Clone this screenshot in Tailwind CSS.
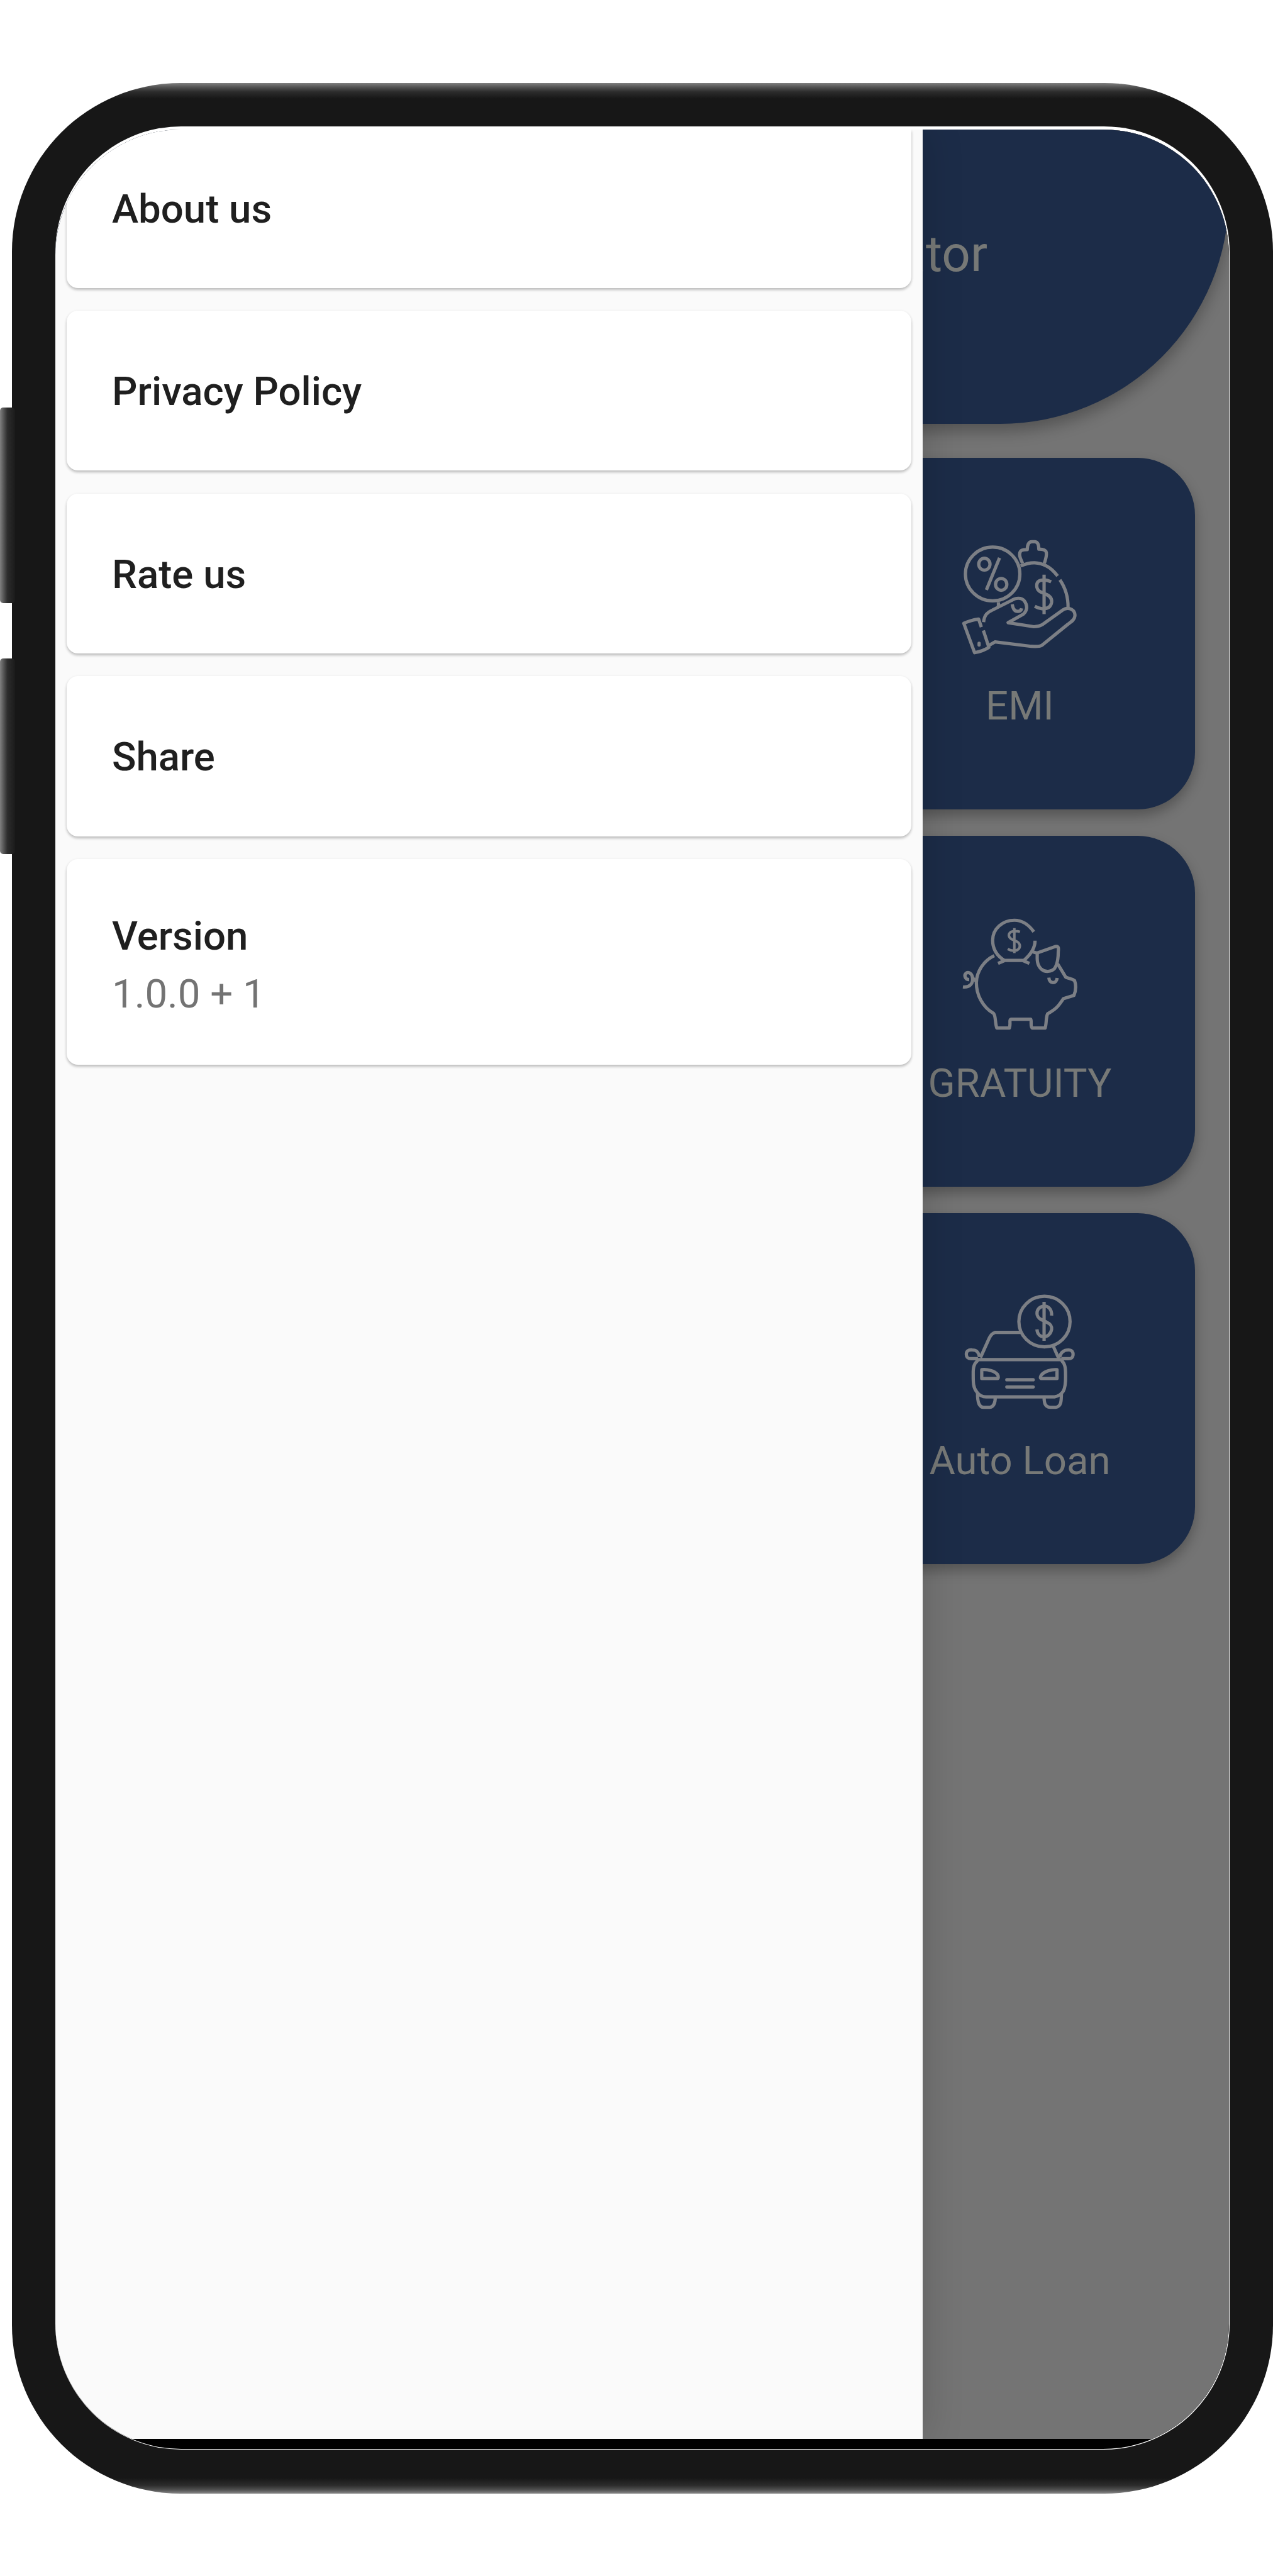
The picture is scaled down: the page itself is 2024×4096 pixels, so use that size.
<!DOCTYPE html>
<html lang="en">
<head>
<meta charset="utf-8">
<title>Menu</title>
<script src="https://cdn.jsdelivr.net/npm/@tailwindcss/browser@4"></script>
</head>
<body class="relative h-[4096px] w-[2024px] overflow-hidden bg-white pl-[19px] pt-[132px] font-['Roboto',sans-serif]">
  <!-- phone frame -->
  <div class="h-[3832.5px] w-[2005px] rounded-[268px] bg-[linear-gradient(to_bottom,#808080_0,#505050_7px,#2c2c2c_14px,#171717_25px,#171717_3808px,#2c2c2c_3820px,#505050_3827px,#808080_3832px)] pb-[69.5px] pl-[69px] pr-[69px] pt-[69px]">
    <div class="h-full w-full rounded-[200px] bg-white pb-[1.2px] pr-[1px] pt-[4.6px]">
      <div class="flex h-full flex-col overflow-hidden rounded-[200px] bg-black">
        <div class="grid h-[3672.7px] shrink-0 overflow-hidden">
          <!-- dimmed home page -->
          <main class="col-start-1 row-start-1 flex flex-col bg-[#747474]">
            <header class="flex h-[468.3px] shrink-0 justify-end rounded-br-[364px] bg-[#1c2c48] pr-[384px] pt-[153px] shadow-[0_12px_24px_rgba(0,0,0,0.28)]">
              <h1 class="text-[80px] leading-[90px] text-[#777977]">Calculator</h1>
            </header>
            <section class="mt-[54.6px] flex flex-col items-end gap-[41.6px] pr-[54px]">
              <article class="flex h-[558.5px] w-[557px] flex-col items-center rounded-[91px] bg-[#1c2c48] pt-[126.4px] shadow-[0_10px_20px_rgba(0,0,0,0.28)]">
                <svg class="h-[192.4px] w-[187.5px] fill-none stroke-[#7c7f85] stroke-[5.2px] [&_*]:[vector-effect:non-scaling-stroke]" viewBox="100 80 940 900" preserveAspectRatio="none" stroke-linejoin="round">
                  <ellipse cx="352" cy="350" rx="217" ry="200"/>
                  <ellipse cx="286" cy="277" rx="45" ry="44"/>
                  <ellipse cx="420" cy="427" rx="45" ry="44"/>
                  <path d="M407 230L302 468"/>
                  <path d="M590 270C575 235 562 220 568 195C573 173 590 168 628 168C628 130 640 110 665 110H690C712 112 720 130 720 165C750 165 775 170 780 190C784 215 775 240 764 270"/>
                  <path d="M575 290C660 255 720 262 780 290C820 308 845 335 870 365M888 393C930 450 955 510 953 602"/>
                  <path d="M762 355V648M818 408C790 395 760 390 735 397C705 405 700 425 705 450C712 480 740 485 775 500C815 515 825 535 822 560C815 600 780 610 745 608C720 606 705 600 688 590"/>
                  <path d="M280 708C285 655 310 635 350 618L500 548C540 525 580 525 605 550C635 590 625 625 595 650L475 712L680 742C710 742 725 738 745 728L915 615C960 590 1015 620 1007 665C1005 690 980 705 950 725L745 880C720 893 700 888 660 888L370 855L320 882"/>
                  <path d="M508 575C515 615 530 630 555 628C570 627 580 620 583 605M398 560V595"/>
                  <path d="M262 745L240 685C200 690 160 700 122 717L208 935C250 928 290 915 322 895L278 770"/>
                  <path d="M244 865V878" stroke-linecap="round"/>
                </svg>
                <span class="mt-[40px] text-[63.5px] leading-[72px] text-[#777977]">EMI</span>
              </article>
              <article class="flex h-[558.5px] w-[557px] flex-col items-center rounded-[91px] bg-[#1c2c48] pt-[126.4px] shadow-[0_10px_20px_rgba(0,0,0,0.28)]">
                <svg class="h-[192.4px] w-[187.5px] fill-none stroke-[#7c7f85] stroke-[5.2px] [&_*]:[vector-effect:non-scaling-stroke]" viewBox="100 87.5 940 900" preserveAspectRatio="none" stroke-linejoin="round">
                  <path d="M680 212C640 160 590 126 525 126C430 126 352 190 352 275C352 340 385 390 445 425M690 278C690 340 650 385 600 425M395 447L450 425H590L645 447"/>
                  <path class="stroke-[4px]" d="M525 185V370M570 212C545 205 520 205 500 212C475 225 475 250 500 265C520 275 545 280 560 295C580 320 565 345 535 352C510 354 490 350 472 340"/>
                  <path d="M660 358L705 370L850 322C880 315 878 335 875 360C875 400 872 450 845 485C820 510 770 515 740 490C705 460 705 420 708 370"/>
                  <path d="M365 390C280 425 224 510 222 590C222 680 270 770 360 820C378 840 370 890 385 928H485C498 900 480 865 500 862H655C665 870 650 920 668 928H770C782 900 775 850 790 822C850 790 870 775 915 710L1000 685C1015 650 1018 610 1005 575C985 560 960 560 935 550L870 450"/>
                  <path d="M800 553C803 602 862 602 866 555"/>
                  <path d="M115 622C165 628 195 600 192 560C190 520 160 508 140 520C122 535 132 568 165 568M188 545C200 570 210 572 222 578"/>
                </svg>
                <span class="mt-[40px] text-[63.5px] leading-[72px] text-[#777977]">GRATUITY</span>
              </article>
              <article class="flex h-[558.5px] w-[557px] flex-col items-center rounded-[91px] bg-[#1c2c48] pt-[126.4px] shadow-[0_10px_20px_rgba(0,0,0,0.28)]">
                <svg class="h-[192.4px] w-[187.5px] fill-none stroke-[#7c7f85] stroke-[5.2px] [&_*]:[vector-effect:non-scaling-stroke]" viewBox="100 95 940 900" preserveAspectRatio="none" stroke-linejoin="round">
                  <ellipse cx="765" cy="312" rx="204" ry="188"/>
                  <path d="M762 165V455M822 268C825 215 790 195 762 197C725 200 700 225 707 262C715 295 750 300 780 315C815 330 825 345 822 370C815 405 790 425 762 425C730 425 708 405 705 370"/>
                  <path d="M578 393H370C345 400 335 415 325 435L255 580M835 495L878 585M230 595H905"/>
                  <path d="M247 575C240 540 225 523 190 523C155 520 142 535 142 555C142 580 155 588 180 588H235M885 578C895 540 920 523 955 523C985 523 995 540 993 560C990 585 975 588 955 588H900"/>
                  <path d="M235 600C200 625 196 660 197 700C197 760 195 800 225 835C245 860 265 872 300 872H845C880 868 900 850 915 830C938 790 933 740 933 700C933 660 930 625 900 600"/>
                  <path d="M265 670C310 665 370 680 390 705C400 720 398 735 390 735H265ZM865 670C820 665 760 685 740 710C728 725 730 738 745 735H865Z"/>
                  <path d="M465 745H675M465 798H675" stroke-linecap="round"/>
                  <path d="M232 840C230 890 235 948 280 950H330C370 945 373 900 373 872M762 872C762 910 765 948 810 950H855C900 945 900 900 900 840"/>
                </svg>
                <span class="mt-[40px] text-[63.5px] leading-[72px] text-[#777977]">Auto Loan</span>
              </article>
            </section>
          </main>
          <!-- drawer -->
          <nav class="z-10 col-start-1 row-start-1 flex w-[1379px] flex-col gap-[36.4px] bg-[#fafafa] pl-[17.5px] pr-[18.5px] text-[63.5px] leading-[72px] text-[#1f1f1f] shadow-[0_0_60px_rgba(0,0,0,0.18)]">
            <a class="h-[252.2px] rounded-b-[18px] bg-white pl-[72.5px] pt-[91px] font-medium shadow-[0_3px_4px_rgba(0,0,0,0.22),0_1px_5px_rgba(0,0,0,0.06)]">About us</a>
            <a class="h-[254.2px] rounded-[18px] bg-white pl-[72.5px] pt-[93px] font-medium shadow-[0_3px_4px_rgba(0,0,0,0.22),0_1px_5px_rgba(0,0,0,0.06)]">Privacy Policy</a>
            <a class="h-[254.2px] rounded-[18px] bg-white pl-[72.5px] pt-[93px] font-medium shadow-[0_3px_4px_rgba(0,0,0,0.22),0_1px_5px_rgba(0,0,0,0.06)]">Rate us</a>
            <a class="h-[254.2px] rounded-[18px] bg-white pl-[72.5px] pt-[93px] font-medium shadow-[0_3px_4px_rgba(0,0,0,0.22),0_1px_5px_rgba(0,0,0,0.06)]">Share</a>
            <div class="flex h-[326.8px] flex-col gap-[19.8px] rounded-[18px] bg-white pl-[72.5px] pt-[87px] shadow-[0_3px_4px_rgba(0,0,0,0.22),0_1px_5px_rgba(0,0,0,0.06)]">
              <span class="font-medium">Version</span>
              <span class="text-[#737373]">1.0.0 + 1</span>
            </div>
          </nav>
        </div>
      </div>
    </div>
  </div>
  <!-- volume keys -->
  <div class="absolute left-0 top-[647.5px] flex flex-col gap-[87.6px]">
    <div class="h-[311.6px] w-[24px] rounded-[5px] bg-linear-to-r from-[#808080] via-[#2c2c2c] to-[#1b1b1b]"></div>
    <div class="h-[311.6px] w-[24px] rounded-[5px] bg-linear-to-r from-[#808080] via-[#2c2c2c] to-[#1b1b1b]"></div>
  </div>
</body>
</html>
